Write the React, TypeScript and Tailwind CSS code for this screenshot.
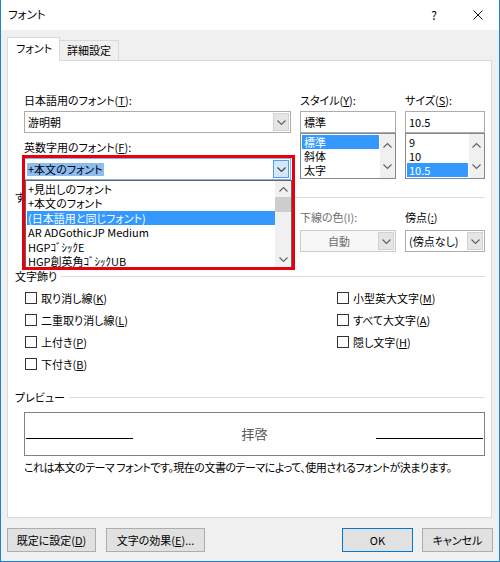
import React from "react";

// Word "フォント" dialog (Windows 10 look), drop-down of 英数字用のフォント opened

function Chevron({ up = false, color = "#606060" }: { up?: boolean; color?: string }) {
  return (
    <svg width="9" height="5" viewBox="0 0 9 5" className="block">
      <polyline
        points={up ? "0.5,4.5 4.5,0.5 8.5,4.5" : "0.5,0.5 4.5,4.5 8.5,0.5"}
        fill="none"
        stroke={color}
        strokeWidth="1.1"
      />
    </svg>
  );
}

function Combo({ text, disabled = false }: { text: string; disabled?: boolean }) {
  return (
    <div
      className={
        "flex h-[22px] border " +
        (disabled ? "border-[#cccccc] bg-[#f7f7f7]" : "border-[#acacac] bg-white")
      }
    >
      <div
        className={
          "flex-1 px-[3px] leading-[20px] whitespace-nowrap overflow-hidden " +
          (disabled ? "text-center text-[#6d6d6d]" : "")
        }
      >
        {text}
      </div>
      <div className="m-[1px] flex w-[16px] items-center justify-center border border-[#d2d2d2] bg-[#e5e5e5]">
        <Chevron />
      </div>
    </div>
  );
}

function TextBox({ text }: { text: string }) {
  return (
    <div className="h-[22px] border border-[#acacac] bg-white px-[3px] leading-[20px]">{text}</div>
  );
}

function ListBox({ items, selected }: { items: string[]; selected: number }) {
  return (
    <div className="flex h-[46px] border border-[#828790] bg-white">
      <div className="flex-1 p-[1px]">
        {items.map((it, i) => (
          <div
            key={it}
            className={
              "h-[14px] px-[2px] leading-[14px] " + (i === selected ? "bg-[#3399ff] text-white" : "")
            }
          >
            {it}
          </div>
        ))}
      </div>
      <div className="flex w-[15px] flex-col items-center justify-between bg-[#f0f0f0] py-[9px]">
        <Chevron up />
        <Chevron />
      </div>
    </div>
  );
}

function GroupHeader({ label }: { label: string }) {
  return (
    <div className="flex h-[16px] items-center">
      <span className="leading-[16px]">{label}</span>
      <div className="ml-[4px] h-[1px] flex-1 bg-[#dcdcdc]" />
    </div>
  );
}

function Check({ children }: { children: React.ReactNode }) {
  return (
    <div className="flex h-[22px] items-center">
      <div className="h-[12px] w-[12px] border border-[#333333] bg-white" />
      <span className="ml-[4px] leading-[16px]">{children}</span>
    </div>
  );
}

function Button({
  children,
  width,
  primary = false,
}: {
  children: React.ReactNode;
  width: string;
  primary?: boolean;
}) {
  return (
    <div
      className={
        "flex h-[24px] items-center justify-center bg-[#e1e1e1] " +
        width +
        (primary ? " border border-[#0078d7]" : " border border-[#adadad]")
      }
    >
      {children}
    </div>
  );
}

const fontItems = [
  "+見出しのフォント",
  "+本文のフォント",
  "(日本語用と同じフォント)",
  "AR ADGothicJP Medium",
  "HGPｺﾞｼｯｸE",
  "HGP創英角ｺﾞｼｯｸUB",
];

export default function App() {
  return (
    <div className="flex h-[562px] w-[500px] flex-col overflow-hidden border-x border-b border-[#1883d7] bg-[#f0f0f0] font-['Noto_Sans_CJK_JP','Noto_Sans',sans-serif] text-[11px] text-black [font-feature-settings:'palt']">
      {/* title bar */}
      <div className="flex h-[30px] shrink-0 items-center bg-white pl-[7px]">
        <span className="text-[11.5px]">フォント</span>
        <span className="ml-auto w-[14px] text-center text-[12px]">?</span>
        <svg width="10" height="10" viewBox="0 0 10 10" className="ml-[32px] mr-[16px]">
          <path d="M0.5 0.5 L9.5 9.5 M9.5 0.5 L0.5 9.5" stroke="#111" strokeWidth="1" />
        </svg>
      </div>

      {/* tabs */}
      <div className="relative z-10 -mb-[1px] flex h-[31px] shrink-0 items-end pl-[6px]">
        <div className="flex h-[24px] w-[53px] items-center border-x border-t border-[#d9d9d9] bg-white pb-[2px] pl-[8px]">
          フォント
        </div>
        <div className="mb-[1px] flex h-[20px] w-[59px] items-center justify-center border-r border-t border-[#d9d9d9] bg-[#f0f0f0]">
          詳細設定
        </div>
      </div>

      {/* tab page */}
      <div className="relative ml-[6px] mr-[7px] h-[458px] shrink-0 border border-[#d9d9d9] bg-white pl-[7px] pr-[6px] pt-[31px]">
        <div className="grid grid-cols-[267px_96px_80px] gap-x-[9px] pl-[9px]">
          <div className="flex flex-col">
            <div className="h-[19px] leading-[16px]">
              日本語用のフォント(<u>T</u>):
            </div>
            <Combo text="游明朝" />
            <div className="mt-[6px] h-[19px] leading-[16px]">
              英数字用のフォント(<u>F</u>):
            </div>
            <div className="flex h-[22px] border border-[#7eb4ea] bg-white">
              <div className="flex flex-1 items-center px-[2px]">
                <span className="bg-[#8cbcf0] px-[1px] leading-[13px]">+本文のフォント</span>
              </div>
              <div className="m-[1px] flex w-[16px] items-center justify-center border border-[#569de5] bg-[#d5e8f9]">
                <Chevron color="#404040" />
              </div>
            </div>
          </div>
          <div className="flex flex-col">
            <div className="h-[19px] leading-[16px]">
              スタイル(<u>Y</u>):
            </div>
            <TextBox text="標準" />
            <ListBox items={["標準", "斜体", "太字"]} selected={0} />
          </div>
          <div className="flex flex-col">
            <div className="h-[19px] leading-[16px]">
              サイズ(<u>S</u>):
            </div>
            <TextBox text="10.5" />
            <ListBox items={["9", "10", "10.5"]} selected={2} />
          </div>
        </div>

        {/* group header, mostly hidden under the open list */}
        <div className="mt-[9px]">
          <GroupHeader label="す" />
        </div>

        <div className="mt-[4px] grid grid-cols-[267px_96px_80px] gap-x-[9px] pl-[9px]">
          <div className="flex flex-col">
            <div className="h-[21px]" />
            <div className="h-[22px] border border-[#acacac] bg-white" />
          </div>
          <div className="flex flex-col">
            <div className="h-[21px] leading-[16px] text-[#6d6d6d]">下線の色(I):</div>
            <Combo text="自動" disabled />
          </div>
          <div className="flex flex-col">
            <div className="h-[21px] leading-[16px]">
              傍点(<u>:</u>)
            </div>
            <Combo text="(傍点なし)" />
          </div>
        </div>

        <div className="mt-[16px]">
          <GroupHeader label="文字飾り" />
        </div>

        <div className="mt-[3px] grid grid-cols-[312px_1fr] pl-[10px]">
          <div className="flex flex-col">
            <Check>
              取り消し線(<u>K</u>)
            </Check>
            <Check>
              二重取り消し線(<u>L</u>)
            </Check>
            <Check>
              上付き(<u>P</u>)
            </Check>
            <Check>
              下付き(<u>B</u>)
            </Check>
          </div>
          <div className="flex flex-col">
            <Check>
              小型英大文字(<u>M</u>)
            </Check>
            <Check>
              すべて大文字(<u>A</u>)
            </Check>
            <Check>
              隠し文字(<u>H</u>)
            </Check>
          </div>
        </div>

        <div className="mt-[14px]">
          <GroupHeader label="プレビュー" />
        </div>

        <div className="ml-[9px] mt-[7px] h-[44px] border border-[#828282]">
          <div className="flex h-full items-center px-[1px]">
            <div className="mt-[8px] h-[1px] w-[107px] bg-black" />
            <div className="flex-1 text-center text-[13px] text-[#5a5a5a]">拝啓</div>
            <div className="mt-[8px] h-[1px] w-[107px] bg-black" />
          </div>
        </div>
        <div className="ml-[9px] mt-[3px] whitespace-nowrap leading-[16px] tracking-[-0.5px]">
          これは本文のテーマ フォントです。現在の文書のテーマによって、使用されるフォントが決まります。
        </div>

        {/* opened drop-down list */}
        <div className="absolute left-[17px] top-[119px] flex h-[88px] w-[267px] border border-[#646464] bg-white">
          <div className="flex-1 pl-[1px] pt-[1px]">
            {fontItems.map((f, i) => (
              <div
                key={f}
                className={
                  "h-[14.4px] whitespace-nowrap px-[1px] leading-[14.4px] " +
                  (i === 2 ? "bg-[#3399ff] text-white" : "")
                }
              >
                {f}
              </div>
            ))}
          </div>
          <div className="flex w-[16px] flex-col items-center bg-[#f0f0f0]">
            <div className="flex h-[16px] items-center justify-center">
              <Chevron up />
            </div>
            <div className="h-[15px] w-full bg-[#cdcdcd]" />
            <div className="flex flex-1 items-end pb-[5px]">
              <Chevron />
            </div>
          </div>
        </div>

        {/* red highlight frame */}
        <div className="absolute left-[14px] top-[94px] h-[115px] w-[273px] border-[3px] border-[#e8000d]" />
      </div>

      {/* buttons */}
      <div className="mt-[10px] flex shrink-0 px-[6px]">
        <Button width="w-[89px]">
          既定に設定(<u>D</u>)
        </Button>
        <div className="ml-[10px]">
          <Button width="w-[99px]">
            文字の効果(<u>E</u>)...
          </Button>
        </div>
        <div className="ml-auto">
          <Button width="w-[71px]" primary>
            OK
          </Button>
        </div>
        <div className="ml-[9px]">
          <Button width="w-[71px]">キャンセル</Button>
        </div>
      </div>
    </div>
  );
}
